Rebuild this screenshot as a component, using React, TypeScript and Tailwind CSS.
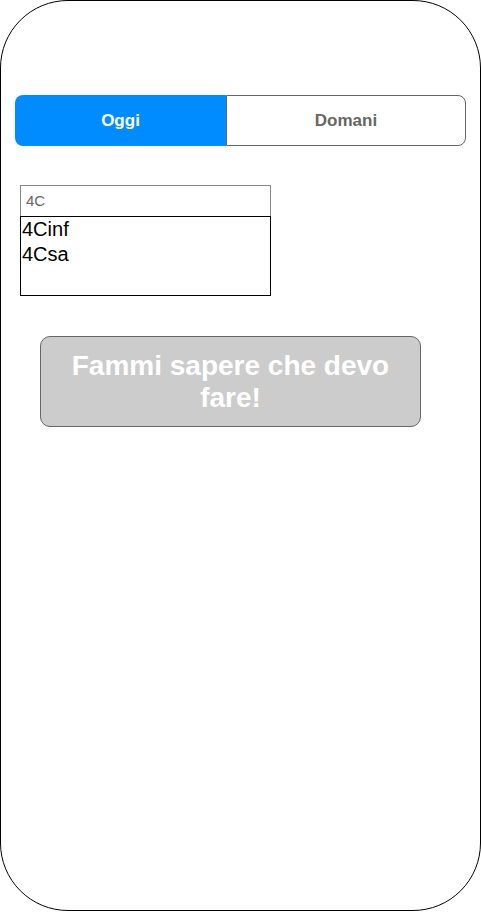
const App = () => {
  return (
    <div className="w-[481px] h-[912px] bg-white font-['Liberation_Sans',Arial,sans-serif]">
      <div className="w-[481px] h-[911px] border border-black rounded-[68px] flex flex-col">
        <div className="mt-[94px] ml-[14px] w-[451px] h-[51px] flex">
          <div className="w-[211px] h-full bg-[#008cff] rounded-l-[8px] flex items-center justify-center text-white font-bold text-[17px]">
            Oggi
          </div>
          <div className="flex-1 h-full border border-[#666] rounded-r-[8px] flex items-center justify-center text-[#666] font-bold text-[17px]">
            Domani
          </div>
        </div>

        <div className="mt-[39px] ml-[19px] w-[251px] flex flex-col">
          <div className="h-[31px] border border-[#888] border-b-0 px-[5px] flex items-center text-[15px] text-[#666]">
            4C
          </div>
          <div className="h-[80px] border border-black px-[1px] text-[20px] leading-[25px] text-black">
            <div>4Cinf</div>
            <div>4Csa</div>
          </div>
        </div>

        <div className="mt-[40px] ml-[39px] w-[381px] h-[91px] bg-[#cccccc] border border-[#666] rounded-[10px] flex items-center justify-center text-center text-white font-bold text-[28px] leading-[32px] px-4">
          Fammi sapere che devo fare!
        </div>
      </div>
    </div>
  );
};

export default App;
